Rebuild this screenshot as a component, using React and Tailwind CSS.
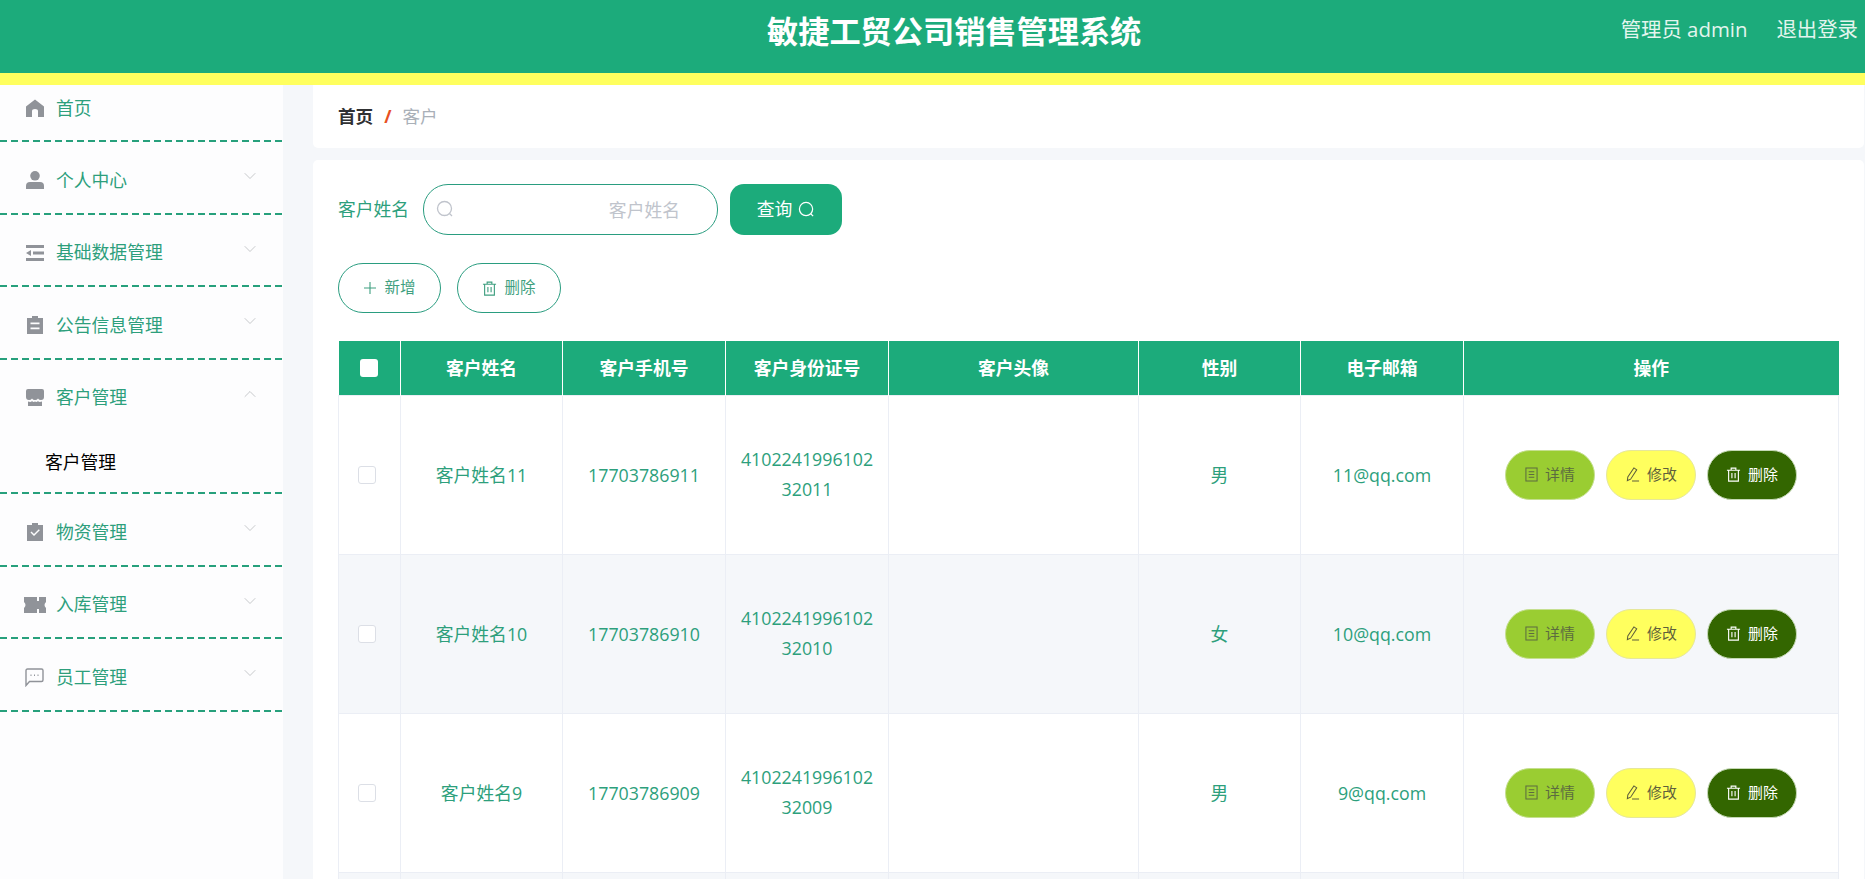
import React from "react";
import { ChevronDown, ChevronUp } from "lucide-react";

// element-ui style solid icons for the sidebar
const HomeIcon = () => (
  <svg viewBox="0 0 18 18" className="w-[18px] h-[18px] fill-[#909399]">
    <path d="M9 0.5 L18 7.5 V18 H12 V12 Q12 10 9 10 Q6 10 6 12 V18 H0 V7.5 Z" />
  </svg>
);
const UserIcon = () => (
  <svg viewBox="0 0 18 18" className="w-[18px] h-[18px] fill-[#909399]">
    <circle cx="9" cy="4.8" r="4.8" />
    <path d="M0 18 V15 Q0 11 4 11 H14 Q18 11 18 15 V18 Z" />
  </svg>
);
const FoldIcon = () => (
  <svg viewBox="0 0 18 18" className="w-[18px] h-[18px] fill-[#909399]">
    <path d="M0 1 H18 V4 H0 Z M7 7.5 H18 V10.5 H7 Z M0 14 H18 V17 H0 Z M0 9 L5 6 V12 Z" />
  </svg>
);
const OrderIcon = () => (
  <svg viewBox="0 0 18 18" className="w-[18px] h-[18px] fill-[#909399]">
    <path fillRule="evenodd" d="M1 2 H6 V0 H12 V2 H17 V18 H1 Z M4.5 6.5 V8.2 H13.5 V6.5 Z M4.5 11.5 V13.2 H13.5 V11.5 Z" />
  </svg>
);
const ShopIcon = () => (
  <svg viewBox="0 0 18 18" className="w-[18px] h-[18px] fill-[#909399]">
    <path d="M2 0 H16 Q18 0 18 2 V8 Q18 11 15 11 Q13 11 12 9.5 Q11 11 9 11 Q7 11 6 9.5 Q5 11 3 11 Q0 11 0 8 V2 Q0 0 2 0 Z" />
    <path d="M2 12.5 Q5 13.5 6 12 Q7.5 13.5 9 12.5 Q10.5 13.5 12 12 Q13 13.5 16 12.5 V17 H2 Z" />
  </svg>
);
const ClaimIcon = () => (
  <svg viewBox="0 0 18 18" className="w-[18px] h-[18px] fill-[#909399]">
    <path fillRule="evenodd" d="M1 2 H6 V0 H12 V2 H17 V18 H1 Z M4.5 9.5 L8 13 L13.8 7.3 L12.8 6.3 L8 11 L5.5 8.5 Z" />
  </svg>
);
const TicketIcon = () => (
  <svg viewBox="0 0 22 18" className="w-[22px] h-[18px] fill-[#909399]">
    <path d="M0 1 H13 V5 H15 V1 H22 V6 Q19 9 22 12 V17 H15 V13 H13 V17 H0 V12 Q3 9 0 6 Z" />
  </svg>
);
const ChatIcon = () => (
  <svg viewBox="0 0 19 19" className="w-[19px] h-[19px] fill-none stroke-[#909399] stroke-[1.4]">
    <path d="M1 17.5 V2.5 Q1 1 2.5 1 H16.5 Q18 1 18 2.5 V12 Q18 13.5 16.5 13.5 H4.5 Z" />
    <path d="M5.5 7.3 H6.5 M9 7.3 H10 M12.5 7.3 H13.5" strokeWidth="1.6" />
  </svg>
);

const SearchGlyph = ({ className }) => (
  <svg viewBox="0 0 18 18" className={className} fill="none" stroke="currentColor" strokeWidth="1.3">
    <circle cx="8.5" cy="8.5" r="7" />
    <path d="M13.5 13.5 L16 16" />
  </svg>
);
const TrashGlyph = ({ className }) => (
  <svg viewBox="0 0 16 16" className={className} fill="none" stroke="currentColor" strokeWidth="1.2">
    <path d="M1 3.5 H15 M5.5 3.5 V1.2 H10.5 V3.5 M2.8 3.5 V15 H13.2 V3.5 M6.3 6.5 V12 M9.7 6.5 V12" />
  </svg>
);
const DocGlyph = ({ className }) => (
  <svg viewBox="0 0 14 16" className={className} fill="none" stroke="currentColor" strokeWidth="1.1">
    <path d="M1 1 H13 V15 H1 Z M4 5 H10 M4 8 H10 M4 11 H10" />
  </svg>
);
const PenGlyph = ({ className }) => (
  <svg viewBox="0 0 16 16" className={className} fill="none" stroke="currentColor" strokeWidth="1.1">
    <path d="M9.5 1 L12.5 3 L6 13 L2.5 14.5 L3 10.5 Z M7.5 15 H15" />
  </svg>
);

const menus = [
  { name: "首页", icon: <HomeIcon />, first: true },
  { name: "个人中心", icon: <UserIcon />, arrow: true },
  { name: "基础数据管理", icon: <FoldIcon />, arrow: true },
  { name: "公告信息管理", icon: <OrderIcon />, arrow: true },
  { name: "客户管理", icon: <ShopIcon />, open: true, sub: "客户管理" },
  { name: "物资管理", icon: <ClaimIcon />, arrow: true },
  { name: "入库管理", icon: <TicketIcon />, arrow: true },
  { name: "员工管理", icon: <ChatIcon />, arrow: true },
];

const rows = [
  { name: "客户姓名11", phone: "17703786911", id1: "4102241996102", id2: "32011", sex: "男", mail: "11@qq.com" },
  { name: "客户姓名10", phone: "17703786910", id1: "4102241996102", id2: "32010", sex: "女", mail: "10@qq.com" },
  { name: "客户姓名9", phone: "17703786909", id1: "4102241996102", id2: "32009", sex: "男", mail: "9@qq.com" },
];

const heads = ["客户姓名", "客户手机号", "客户身份证号", "客户头像", "性别", "电子邮箱", "操作"];

const Sidebar = () => (
  <div className="w-[283px] shrink-0 bg-[#fdfdfe]">
    {menus.map((m) => (
      <div key={m.name}>
        <div
          className={
            m.first
              ? "h-[55px] pb-[9px] flex items-center"
              : "h-[70.5px] pt-[5.5px] flex items-center"
          }
        >
          <div className="w-[56px] shrink-0 flex justify-center pl-[13px]">{m.icon}</div>
          <span className="text-[17.8px] text-[#2d9f7c]">{m.name}</span>
          {m.arrow && (
            <ChevronDown className="ml-auto mr-[23px] -translate-y-1 w-[20px] h-[20px] text-[#b4b6bb]" strokeWidth={0.9} />
          )}
          {m.open && (
            <ChevronUp className="ml-auto mr-[23px] -translate-y-1 w-[20px] h-[20px] text-[#b4b6bb]" strokeWidth={0.9} />
          )}
        </div>
        {m.sub && (
          <div className="h-[62px] pl-[45px] pt-[2px] flex items-center text-[17.8px] text-black">{m.sub}</div>
        )}
        <div className="h-[2px] bg-[repeating-linear-gradient(90deg,#27a07c_0_7px,transparent_7px_11px)]" />
      </div>
    ))}
  </div>
);

const ActionButton = ({ className, icon, label }) => (
  <button className={"w-[90px] h-[50px] rounded-[25px] border flex items-center justify-center gap-[7px] text-[14.9px] " + className}>
    {icon}
    {label}
  </button>
);

const App = () => {
  return (
    <div className="w-[1865px] h-[879px] overflow-hidden bg-[#f5f7fa] font-['Open_Sans','Noto_Sans_CJK_SC',sans-serif]">
      <div className="h-[73px] bg-[#1cab7b] flex items-center text-white">
        <div className="ml-[767px] pb-[12px] text-[31.2px] font-bold font-['Noto_Sans_CJK_SC',sans-serif]">
          敏捷工贸公司销售管理系统
        </div>
        <div className="ml-auto mr-[7px] pb-[15px] flex gap-[29px] text-[20.4px] text-[#e3f5ee]">
          <span>管理员 admin</span>
          <span>退出登录</span>
        </div>
      </div>
      <div className="h-[12px] bg-[#ffff5e]" />

      <div className="flex">
        <Sidebar />
        <div className="ml-[30px] w-[1551px] flex flex-col gap-[12px]">
          <div className="h-[63px] bg-white rounded-b-[5px] pl-[25px] flex items-center text-[17.6px]">
            <span className="font-bold text-[#303133]">首页</span>
            <span className="mx-[11px] font-bold text-[#e8501f]">/</span>
            <span className="text-[#a9b0b8]">客户</span>
          </div>

          <div className="bg-white rounded-[5px] px-[25px] pt-[24px]">
            <div className="flex items-center">
              <span className="w-[85px] text-[17.8px] text-[#2d9f7c]">客户姓名</span>
              <div className="relative w-[295px] h-[51px]">
                <SearchGlyph className="absolute left-[13px] top-[16px] w-[18px] h-[18px] text-[#c0c4cc]" />
                <input
                  placeholder="客户姓名"
                  className="w-full h-full rounded-[25px] border border-[#2a9d80] pr-[37px] text-right text-[17.8px] outline-none placeholder:text-[#c0c4cc]"
                />
              </div>
              <button className="ml-[12px] w-[112px] h-[51px] rounded-[14px] bg-[#1cab7b] text-white text-[17.8px] flex items-center justify-center gap-[6px]">
                查询
                <SearchGlyph className="w-[17px] h-[17px]" />
              </button>
            </div>

            <div className="mt-[28px] flex gap-[16px]">
              <button className="w-[103px] h-[50px] rounded-[25px] border border-[#2a9d80] text-[#3f9f80] text-[15.5px] flex items-center justify-center gap-[7px]">
                <svg viewBox="0 0 14 14" className="w-[14px] h-[14px]" fill="none" stroke="currentColor" strokeWidth="1.1">
                  <path d="M7 1 V13 M1 7 H13" />
                </svg>
                新增
              </button>
              <button className="w-[104px] h-[50px] rounded-[25px] border border-[#2a9d80] text-[#3f9f80] text-[15.5px] flex items-center justify-center gap-[7px]">
                <TrashGlyph className="w-[15px] h-[15px]" />
                删除
              </button>
            </div>

            <table className="mt-[28px] w-[1500px] table-fixed border-collapse text-[17.8px] text-[#2d9f7c] text-center">
              <colgroup>
                <col className="w-[62px]" />
                <col className="w-[162px]" />
                <col className="w-[163px]" />
                <col className="w-[163px]" />
                <col className="w-[250px]" />
                <col className="w-[162px]" />
                <col className="w-[163px]" />
                <col className="w-[375px]" />
              </colgroup>
              <thead>
                <tr className="h-[54px] bg-[#1cab7b] text-white">
                  <th className="border-r border-white">
                    <div className="mx-auto w-[18px] h-[18px] rounded-[3px] bg-white" />
                  </th>
                  {heads.map((h, i) => (
                    <th key={h} className={"font-bold font-['Noto_Sans_CJK_SC',sans-serif] " + (i < 6 ? "border-r border-white" : "")}>
                      {h}
                    </th>
                  ))}
                </tr>
              </thead>
              <tbody>
                {rows.map((r, i) => (
                  <tr key={r.name} className={"h-[159px] " + (i % 2 === 1 ? "bg-[#f5f7fa]" : "bg-white")}>
                    <td className="border border-[#ebeef5]">
                      <div className="ml-[19px] w-[18px] h-[18px] rounded-[3px] border border-[#dcdfe6] bg-white" />
                    </td>
                    <td className="border border-[#ebeef5] pt-[2px]">{r.name}</td>
                    <td className="border border-[#ebeef5] pt-[2px]">{r.phone}</td>
                    <td className="border border-[#ebeef5] leading-[29.5px]">
                      {r.id1}
                      <br />
                      {r.id2}
                    </td>
                    <td className="border border-[#ebeef5]"></td>
                    <td className="border border-[#ebeef5] pt-[2px]">{r.sex}</td>
                    <td className="border border-[#ebeef5] pt-[2px]">{r.mail}</td>
                    <td className="border border-[#ebeef5]">
                      <div className="flex justify-center gap-[11px]">
                        <ActionButton
                          className="bg-[#9acd32] border-[#c5df8f] text-[#5c6b40]"
                          icon={<DocGlyph className="w-[13px] h-[15px]" />}
                          label="详情"
                        />
                        <ActionButton
                          className="bg-[#ffff5e] border-[#e6e79a] text-[#5f5f3c]"
                          icon={<PenGlyph className="w-[15px] h-[15px]" />}
                          label="修改"
                        />
                        <ActionButton
                          className="bg-[#336600] border-[#c5d9b5] text-white"
                          icon={<TrashGlyph className="w-[15px] h-[15px]" />}
                          label="删除"
                        />
                      </div>
                    </td>
                  </tr>
                ))}
                {/* next row is only just visible above the fold */}
                <tr className="h-[159px] bg-[#f5f7fa]">
                  <td className="border border-[#ebeef5]"></td>
                  <td className="border border-[#ebeef5]"></td>
                  <td className="border border-[#ebeef5]"></td>
                  <td className="border border-[#ebeef5]"></td>
                  <td className="border border-[#ebeef5]"></td>
                  <td className="border border-[#ebeef5]"></td>
                  <td className="border border-[#ebeef5]"></td>
                  <td className="border border-[#ebeef5]"></td>
                </tr>
              </tbody>
            </table>
          </div>
        </div>
      </div>
    </div>
  );
};

export default App;
